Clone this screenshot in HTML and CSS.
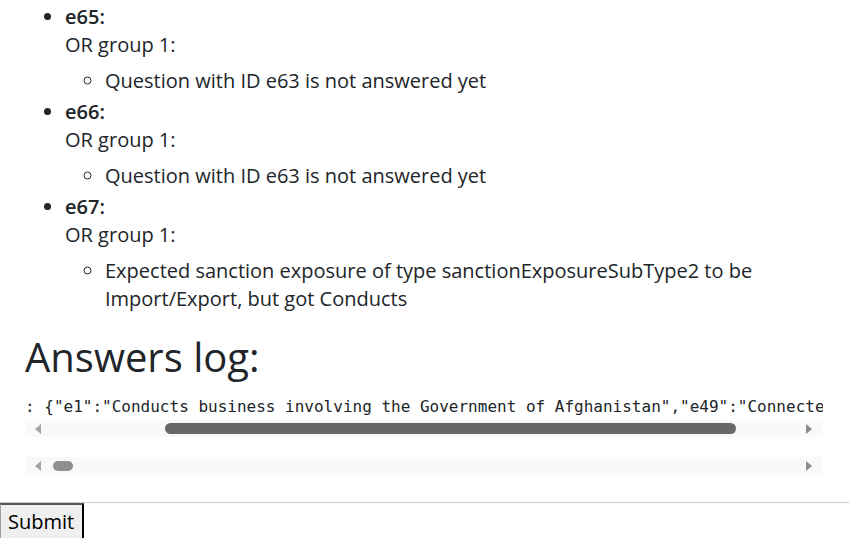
FILE: index.html
```html
<!DOCTYPE html>
<html lang="en">
<head>
<meta charset="utf-8">
<title>Answers</title>
<link rel="stylesheet" href="styles.css">
</head>
<body>
<div class="content">
  <ul class="results">
    <li>
      <strong>e65:</strong>
      <div>OR group 1:</div>
      <ul class="reasons">
        <li>Question with ID e63 is not answered yet</li>
      </ul>
    </li>
    <li>
      <strong>e66:</strong>
      <div>OR group 1:</div>
      <ul class="reasons">
        <li>Question with ID e63 is not answered yet</li>
      </ul>
    </li>
    <li>
      <strong>e67:</strong>
      <div>OR group 1:</div>
      <ul class="reasons">
        <li>Expected sanction exposure of type sanctionExposureSubType2 to be Import/Export, but got Conducts</li>
      </ul>
    </li>
  </ul>
  <h1 class="log-title">Answers log:</h1>
  <div class="log-line">: {"e1":"Conducts business involving the Government of Afghanistan","e49":"Connected to sanctioned territory","e50":"Yes"}</div>
  <div class="hscroll">
    <svg class="arrow arrow-left" width="6" height="10" viewBox="0 0 6 10"><polygon points="6,0 6,10 0,5"/></svg>
    <div class="track"><div class="thumb thumb-main"></div></div>
    <svg class="arrow arrow-right" width="6" height="10" viewBox="0 0 6 10"><polygon points="0,0 0,10 6,5"/></svg>
  </div>
  <div class="hscroll hscroll-second">
    <svg class="arrow arrow-left" width="6" height="10" viewBox="0 0 6 10"><polygon points="6,0 6,10 0,5"/></svg>
    <div class="track"><div class="thumb thumb-small"></div></div>
    <svg class="arrow arrow-right" width="6" height="10" viewBox="0 0 6 10"><polygon points="0,0 0,10 6,5"/></svg>
  </div>
</div>
<hr class="divider">
<button class="submit" type="button">Submit</button>
</body>
</html>
```
FILE: styles.css
```css
html, body {
  margin: 0;
  padding: 0;
  overflow: hidden;
  background: #fff;
}
body {
  font-family: "Open Sans", sans-serif;
  font-size: 20px;
  line-height: 28px;
  color: #212529;
}
.content {
  padding: 3px 29px 0 25px;
}
.results {
  margin: 0 0 20px 0;
  padding-left: 40px;
  list-style: disc;
}
.results strong {
  font-weight: 600;
}
.reasons {
  margin: 8px 0 3px 0;
  padding-left: 40px;
  list-style: circle;
}
.log-title {
  margin: 0 0 12px 0;
  font-size: 40px;
  line-height: 48px;
  font-weight: 400;
}
.log-line {
  font-family: "DejaVu Sans Mono", monospace;
  font-size: 16px;
  line-height: 27px;
  white-space: pre;
  overflow: hidden;
  color: #212529;
}
.hscroll {
  display: flex;
  align-items: center;
  height: 17px;
  background: #f9f9f9;
  padding: 0 11px 0 10px;
}
.hscroll-second {
  margin-top: 20px;
  height: 18px;
}
.arrow {
  flex: none;
  display: block;
}
.arrow-left { fill: #a3a3a3; }
.arrow-right { fill: #8c8c8c; }
.track {
  flex: 1;
  display: flex;
  align-items: center;
  height: 100%;
}
.thumb {
  border-radius: 6px;
}
.thumb-main {
  margin-left: 124px;
  width: 571px;
  height: 11px;
  background: #686868;
}
.thumb-small {
  margin-left: 12px;
  width: 20px;
  height: 10px;
  background: #8f8f8f;
}
.divider {
  margin: 27px 3px 0 0;
  border: 0;
  border-top: 1px solid #cccccc;
  height: 0;
}
.submit {
  display: block;
  margin: 0;
  padding: 3px 8px 4px 7px;
  font-family: "Open Sans", sans-serif;
  font-size: 20px;
  line-height: 27px;
  color: #000;
  background: #efefef;
  border-style: solid;
  border-width: 2px 2px 2px 1px;
  border-color: #555 #000 #000 #a0a0a0;
  border-radius: 0;
}
```
